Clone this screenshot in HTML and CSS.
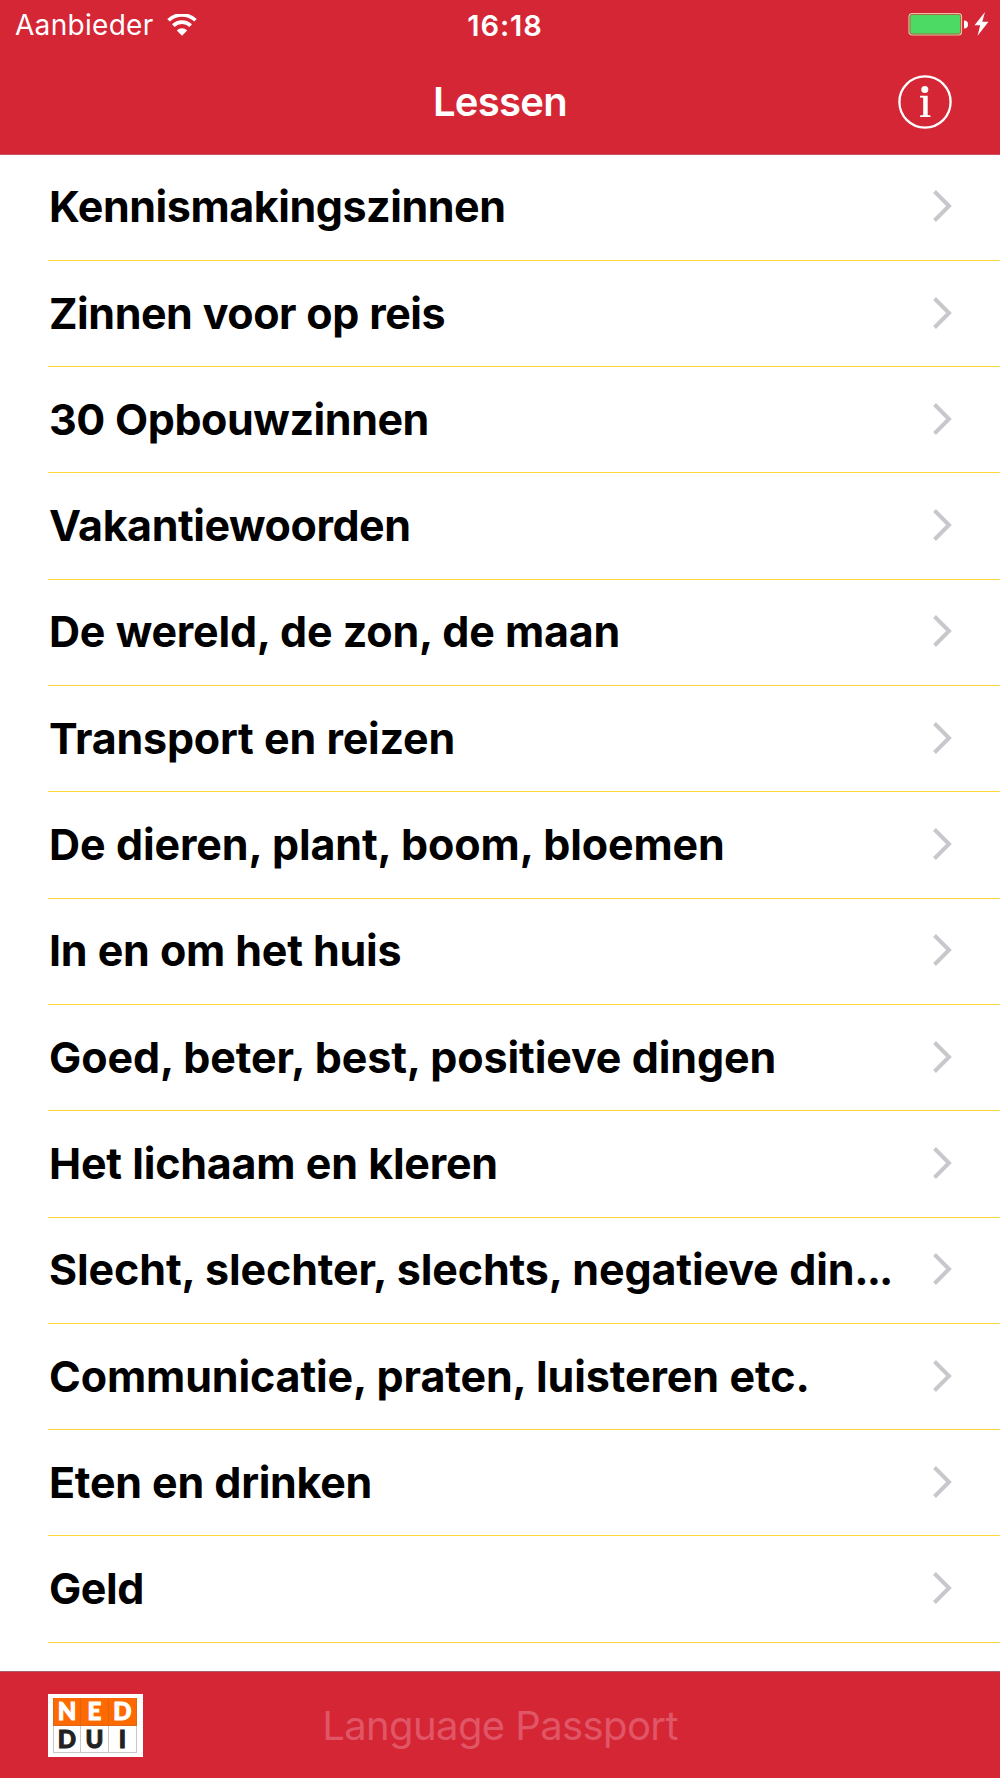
FILE: index.html
```html
<!DOCTYPE html>
<html lang="nl">
<head>
  <meta charset="utf-8">
  <title>Lessen</title>
  <link rel="stylesheet" href="styles.css">
</head>
<body>

  <header class="header">
    <div class="status-bar">
      <div class="carrier">
        <span class="carrier-name">Aanbieder</span>
        <svg class="wifi" width="30" height="23" viewBox="0 0 30 23">
          <path d="M1.5 6.3 A19.5 19.5 0 0 1 28.5 6.3" fill="none" stroke="#fff" stroke-width="3.6"/>
          <path d="M6.3 11.6 A12.5 12.5 0 0 1 23.7 11.6" fill="none" stroke="#fff" stroke-width="3.6"/>
          <path d="M15 21.8 L9.8 16.5 A7.4 7.4 0 0 1 20.2 16.5 Z" fill="#fff"/>
        </svg>
      </div>
      <span class="clock">16:18</span>
      <div class="power">
        <svg width="82" height="26" viewBox="0 0 82 26">
          <rect x="1" y="1.5" width="52.5" height="21.5" rx="3" fill="#4cd964" stroke="#f0bcae" stroke-width="1.2"/>
          <rect x="2" y="2.5" width="50.5" height="19.5" rx="2" fill="none" stroke="#a8703c" stroke-width="1"/>
          <path d="M56 8.5 a4 4 0 0 1 0 8 Z" fill="#fff"/>
          <path d="M77 0 L66.5 13.3 H72.2 L69.6 23.8 L80.5 9.7 H74.3 Z" fill="#fff"/>
        </svg>
      </div>
    </div>
    <div class="nav-bar">
      <h1 class="title">Lessen</h1>
      <svg class="info" width="56" height="56" viewBox="0 0 56 56">
        <circle cx="28" cy="28" r="25.6" fill="none" stroke="#fff" stroke-width="2.3"/>
        <circle cx="27.8" cy="15.6" r="3.5" fill="#fff"/>
        <path d="M23 21.8 H30.7 V41 L33.5 41.5 V43 H23 V41.5 L26.2 41 V23.8 L23 23.5 Z" fill="#fff"/>
      </svg>
    </div>
  </header>

  <ul class="lessons">
    <li class="lesson"><span class="name">Kennismakingszinnen</span><svg class="chevron" viewBox="0 0 20 32"><path d="M1.5 1.5 L16 16 L1.5 30.5"/></svg></li>
    <li class="lesson"><span class="name">Zinnen voor op reis</span><svg class="chevron" viewBox="0 0 20 32"><path d="M1.5 1.5 L16 16 L1.5 30.5"/></svg></li>
    <li class="lesson"><span class="name">30 Opbouwzinnen</span><svg class="chevron" viewBox="0 0 20 32"><path d="M1.5 1.5 L16 16 L1.5 30.5"/></svg></li>
    <li class="lesson"><span class="name">Vakantiewoorden</span><svg class="chevron" viewBox="0 0 20 32"><path d="M1.5 1.5 L16 16 L1.5 30.5"/></svg></li>
    <li class="lesson"><span class="name">De wereld, de zon, de maan</span><svg class="chevron" viewBox="0 0 20 32"><path d="M1.5 1.5 L16 16 L1.5 30.5"/></svg></li>
    <li class="lesson"><span class="name">Transport en reizen</span><svg class="chevron" viewBox="0 0 20 32"><path d="M1.5 1.5 L16 16 L1.5 30.5"/></svg></li>
    <li class="lesson"><span class="name">De dieren, plant, boom, bloemen</span><svg class="chevron" viewBox="0 0 20 32"><path d="M1.5 1.5 L16 16 L1.5 30.5"/></svg></li>
    <li class="lesson"><span class="name">In en om het huis</span><svg class="chevron" viewBox="0 0 20 32"><path d="M1.5 1.5 L16 16 L1.5 30.5"/></svg></li>
    <li class="lesson"><span class="name">Goed, beter, best, positieve dingen</span><svg class="chevron" viewBox="0 0 20 32"><path d="M1.5 1.5 L16 16 L1.5 30.5"/></svg></li>
    <li class="lesson"><span class="name">Het lichaam en kleren</span><svg class="chevron" viewBox="0 0 20 32"><path d="M1.5 1.5 L16 16 L1.5 30.5"/></svg></li>
    <li class="lesson"><span class="name">Slecht, slechter, slechts, negatieve din<span class="dots">...</span></span><svg class="chevron" viewBox="0 0 20 32"><path d="M1.5 1.5 L16 16 L1.5 30.5"/></svg></li>
    <li class="lesson"><span class="name">Communicatie, praten, luisteren etc.</span><svg class="chevron" viewBox="0 0 20 32"><path d="M1.5 1.5 L16 16 L1.5 30.5"/></svg></li>
    <li class="lesson"><span class="name">Eten en drinken</span><svg class="chevron" viewBox="0 0 20 32"><path d="M1.5 1.5 L16 16 L1.5 30.5"/></svg></li>
    <li class="lesson"><span class="name">Geld</span><svg class="chevron" viewBox="0 0 20 32"><path d="M1.5 1.5 L16 16 L1.5 30.5"/></svg></li>
  </ul>

  <footer class="toolbar">
    <div class="logo">
      <div class="logo-grid">
        <span class="tile orange">N</span>
        <span class="tile orange">E</span>
        <span class="tile orange">D</span>
        <span class="tile">D</span>
        <span class="tile">U</span>
        <span class="tile">I</span>
      </div>
    </div>
    <span class="app-name">Language Passport</span>
  </footer>

</body>
</html>
```
FILE: styles.css
```css
* {
  box-sizing: border-box;
}

body {
  margin: 0;
  width: 1000px;
  height: 1778px;
  display: flex;
  flex-direction: column;
  overflow: hidden;
  background: #fff;
  font-family: Inter, "Liberation Sans", sans-serif;
}

.header {
  height: 154.6px;
  flex: none;
  background: #d52635;
  border-bottom: 1px solid #c9505c;
  color: #fff;
}

/* status bar */
.status-bar {
  height: 50px;
  display: grid;
  grid-template-columns: 1fr auto 1fr;
  align-items: center;
  padding: 0 10px 0 15px;
}

.carrier {
  display: flex;
  align-items: center;
  gap: 13px;
}

.carrier-name {
  font-size: 28px;
  letter-spacing: 0.3px;
}

.clock {
  padding-left: 5px;
  font-size: 29px;
  font-weight: 600;
  letter-spacing: 0.9px;
}

.power {
  display: flex;
  justify-content: flex-end;
}

/* navigation bar */
.nav-bar {
  height: 103px;
  display: grid;
  grid-template-columns: 1fr auto 1fr;
  align-items: center;
  padding: 0 47px;
}

.title {
  grid-column: 2;
  margin: 0;
  font-size: 40px;
  font-weight: 600;
  letter-spacing: -0.7px;
}

.info {
  justify-self: end;
}

/* list */
.lessons {
  flex: 1;
  min-height: 0;
  overflow: hidden;
  margin: 0;
  padding: 0 0 0 48px;
  list-style: none;
}

.lesson {
  height: 106.3px;
  display: flex;
  align-items: center;
  justify-content: space-between;
  padding: 0 47px 2px 1px;
  border-bottom: 1px solid #ffd93b;
  letter-spacing: -0.45px;
}

.name {
  font-size: 43px;
  font-weight: 700;
  word-spacing: 0.5px;
  white-space: nowrap;
}

.lesson:nth-child(5),
.lesson:nth-child(6),
.lesson:nth-child(10) {
  letter-spacing: -0.22px;
}

.lesson:nth-child(8),
.lesson:nth-child(13) {
  letter-spacing: -0.28px;
}

.lesson:nth-child(7),
.lesson:nth-child(9),
.lesson:nth-child(11),
.lesson:nth-child(12) {
  letter-spacing: -0.12px;
}

.dots {
  letter-spacing: -2px;
}

.chevron {
  width: 20px;
  height: 32px;
  flex: none;
  fill: none;
  stroke: #c7c7cc;
  stroke-width: 4;
}

/* bottom bar */
.toolbar {
  height: 107px;
  flex: none;
  display: grid;
  grid-template-columns: 1fr auto 1fr;
  align-items: center;
  padding: 0 48px;
  background: #d52635;
  border-top: 1px solid #a5606a;
}

.logo {
  width: 95px;
  height: 63px;
  padding: 4px 5px;
  background: #fff;
}

.logo-grid {
  display: grid;
  grid-template-columns: repeat(3, 28px);
  grid-template-rows: 28px 27px;
}

.tile {
  display: flex;
  align-items: center;
  justify-content: center;
  border-right: 1px solid #c8c8c8;
  border-bottom: 1px solid #c8c8c8;
  color: #222;
  font-family: Lato, sans-serif;
  font-size: 24px;
  font-weight: 900;
  line-height: 24px;
  -webkit-text-stroke: 1px currentColor;
}

.tile:nth-child(3n + 1) {
  border-left: 1px solid #c8c8c8;
}

.tile.orange {
  background: #ff6a00;
  border-color: #d9661a;
  color: #fff;
}

.app-name {
  color: #e05666;
  font-size: 40px;
  letter-spacing: -0.6px;
}
```
